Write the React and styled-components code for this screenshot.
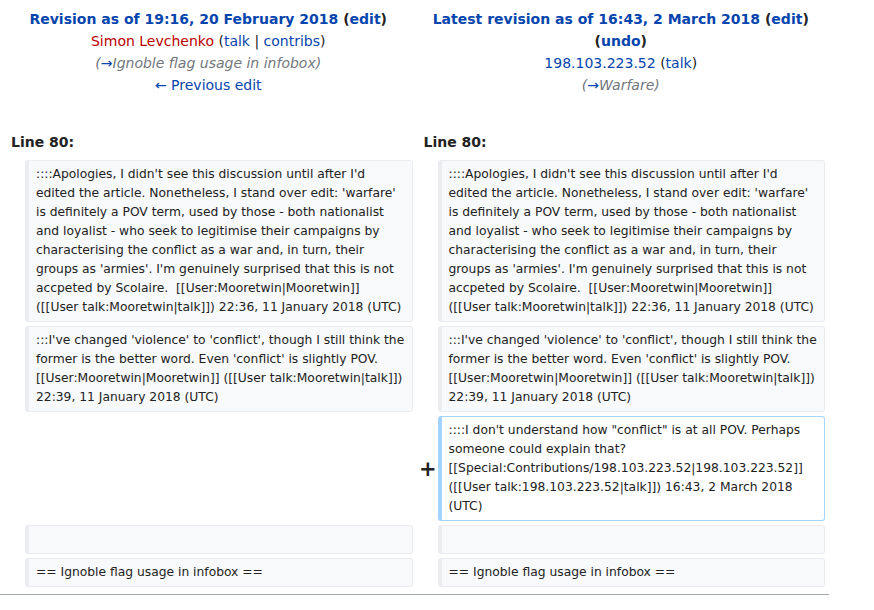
import React from "react";
import styled, { createGlobalStyle } from "styled-components";

const GlobalStyle = createGlobalStyle`
  html, body {
    margin: 0;
    padding: 0;
    background: #fff;
  }
  body {
    font-family: "DejaVu Sans", "Liberation Sans", sans-serif;
    color: #222;
  }
`;

const DiffTable = styled.table`
  width: 829px;
  table-layout: fixed;
  border-collapse: separate;
  border-spacing: 4px;
  padding-bottom: 3px;
  border-bottom: 1px solid #a2a9b1;
`;

const TitleCell = styled.td`
  text-align: center;
  vertical-align: top;
  font-size: 14px;
  line-height: 22px;
  padding: 4px 0 28px;
`;

const TitleLine = styled.div`
  font-weight: ${p => (p.$bold ? "bold" : "normal")};
`;

const Link = styled.a`
  color: ${p => (p.$red ? "#ba0000" : "#0645ad")};
  text-decoration: none;
`;

const Paren = styled.span`
  color: #222;
  font-weight: bold;
`;

const Comment = styled.span`
  color: #72777d;
  font-style: italic;
`;

const LineNo = styled.td`
  font-weight: bold;
  font-size: 14px;
  line-height: 16px;
  padding: 6px 7px;
  text-align: left;
`;

const Marker = styled.td`
  text-align: right;
  vertical-align: middle;
  font-weight: bold;
  font-size: 21px;
  padding: 0;
`;

const Plus = styled.span`
  margin-right: -3px;
`;

const Content = styled.td`
  vertical-align: top;
  font-size: 12.3px;
  line-height: 19px;
  padding: 4px 6px 4px 7px;
  white-space: pre-wrap;
  word-wrap: break-word;
  border-style: solid;
  border-width: 1px 1px 1px 4px;
  border-radius: 3px;
  border-color: ${p => (p.$added ? "#a3d3ff" : "#eaecf0")};
  background: ${p => (p.$added ? "#fff" : "#f8f9fa")};
  color: #222;
`;

const Empty = styled.td`
  padding: 0;
`;

const rows = [
  {
    left: "::::Apologies, I didn't see this discussion until after I'd edited the article. Nonetheless, I stand over edit: 'warfare' is definitely a POV term, used by those - both nationalist and loyalist - who seek to legitimise their campaigns by characterising the conflict as a war and, in turn, their groups as 'armies'. I'm genuinely surprised that this is not accpeted by Scolaire.  [[User:Mooretwin|Mooretwin]] ([[User talk:Mooretwin|talk]]) 22:36, 11 January 2018 (UTC)",
  },
  {
    left: ":::I've changed 'violence' to 'conflict', though I still think the former is the better word. Even 'conflict' is slightly POV. [[User:Mooretwin|Mooretwin]] ([[User talk:Mooretwin|talk]]) 22:39, 11 January 2018 (UTC)",
  },
  {
    added: "::::I don't understand how \"conflict\" is at all POV. Perhaps someone could explain that? [[Special:Contributions/198.103.223.52|198.103.223.52]] ([[User talk:198.103.223.52|talk]]) 16:43, 2 March 2018 (UTC)",
  },
  { left: " " },
  { left: "== Ignoble flag usage in infobox ==" },
];

export default function App() {
  return (
    <>
      <GlobalStyle />
      <DiffTable>
        <colgroup>
          <col style={{ width: 17 }} />
          <col />
          <col style={{ width: 17 }} />
          <col />
        </colgroup>
        <tbody>
          <tr>
            <TitleCell colSpan={2}>
              <TitleLine $bold>
                <Link href="#">Revision as of 19:16, 20 February 2018</Link>{" "}
                <Paren>
                  (<Link href="#">edit</Link>)
                </Paren>
              </TitleLine>
              <TitleLine>
                <Link href="#" $red>
                  Simon Levchenko
                </Link>{" "}
                (<Link href="#">talk</Link> | <Link href="#">contribs</Link>)
              </TitleLine>
              <TitleLine>
                <Comment>
                  (<Link href="#">→</Link>Ignoble flag usage in infobox)
                </Comment>
              </TitleLine>
              <TitleLine>
                <Link href="#">← Previous edit</Link>
              </TitleLine>
            </TitleCell>
            <TitleCell colSpan={2}>
              <TitleLine $bold>
                <Link href="#">Latest revision as of 16:43, 2 March 2018</Link>{" "}
                <Paren>
                  (<Link href="#">edit</Link>)
                </Paren>
              </TitleLine>
              <TitleLine $bold>
                <Paren>
                  (<Link href="#">undo</Link>)
                </Paren>
              </TitleLine>
              <TitleLine>
                <Link href="#">198.103.223.52</Link> (<Link href="#">talk</Link>)
              </TitleLine>
              <TitleLine>
                <Comment>
                  (<Link href="#">→</Link>Warfare)
                </Comment>
              </TitleLine>
            </TitleCell>
          </tr>
          <tr>
            <LineNo colSpan={2}>Line 80:</LineNo>
            <LineNo colSpan={2}>Line 80:</LineNo>
          </tr>
          {rows.map((r, i) =>
            r.added ? (
              <tr key={i}>
                <Empty colSpan={2} />
                <Marker>
                  <Plus>+</Plus>
                </Marker>
                <Content $added>{r.added}</Content>
              </tr>
            ) : (
              <tr key={i}>
                <Marker />
                <Content>{r.left}</Content>
                <Marker />
                <Content>{r.left}</Content>
              </tr>
            )
          )}
        </tbody>
      </DiffTable>
    </>
  );
}
